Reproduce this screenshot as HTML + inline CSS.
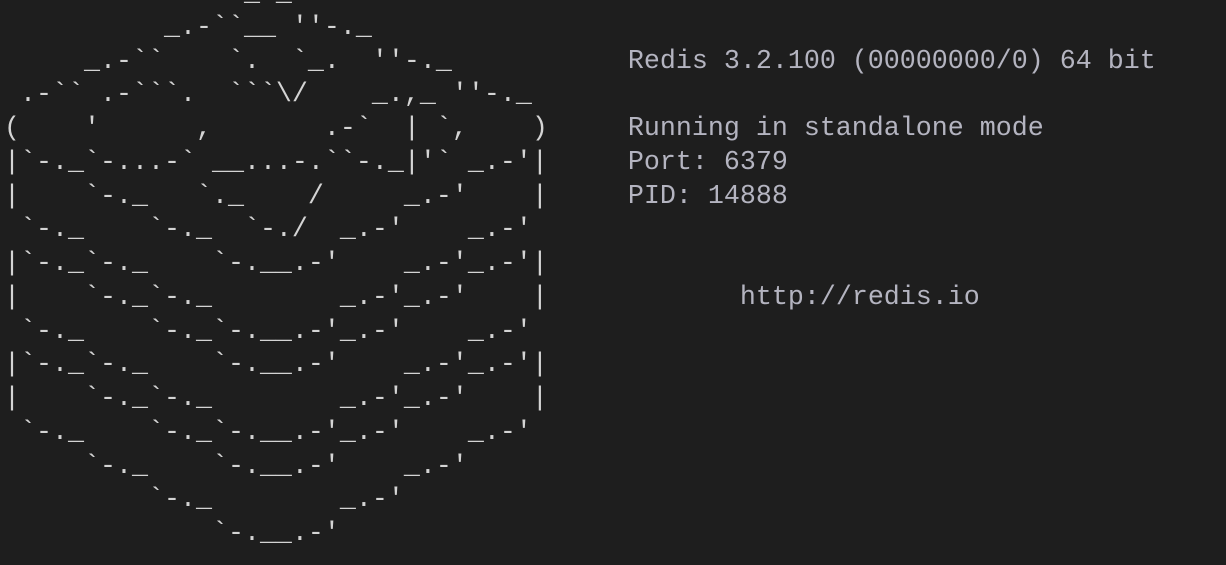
<!DOCTYPE html>
<html><head><meta charset="utf-8"><style>
html,body{margin:0;padding:0;background:#1e1e1e;width:1226px;height:565px;overflow:hidden}
pre{position:absolute;left:-12px;top:-22px;margin:0;font-family:"Liberation Mono",monospace;font-size:26.67px;line-height:33.75px;color:#d4d4d4;white-space:pre}
.t{color:#b4b4c0}
</style></head><body>
<pre>                _._
           _.-&#96;&#96;__ ''-._
      _.-&#96;&#96;    &#96;.  &#96;_.  ''-._           <span class="t">Redis 3.2.100 (00000000/0) 64 bit</span>
  .-&#96;&#96; .-&#96;&#96;&#96;.  &#96;&#96;&#96;\/    _.,_ ''-._
 (    '      ,       .-&#96;  | &#96;,    )     <span class="t">Running in standalone mode</span>
 |&#96;-._&#96;-...-&#96; __...-.&#96;&#96;-._|'&#96; _.-'|     <span class="t">Port: 6379</span>
 |    &#96;-._   &#96;._    /     _.-'    |     <span class="t">PID: 14888</span>
  &#96;-._    &#96;-._  &#96;-./  _.-'    _.-'
 |&#96;-._&#96;-._    &#96;-.__.-'    _.-'_.-'|
 |    &#96;-._&#96;-._        _.-'_.-'    |            <span class="t">http://redis.io</span>
  &#96;-._    &#96;-._&#96;-.__.-'_.-'    _.-'
 |&#96;-._&#96;-._    &#96;-.__.-'    _.-'_.-'|
 |    &#96;-._&#96;-._        _.-'_.-'    |
  &#96;-._    &#96;-._&#96;-.__.-'_.-'    _.-'
      &#96;-._    &#96;-.__.-'    _.-'
          &#96;-._        _.-'
              &#96;-.__.-'</pre>
</body></html>
